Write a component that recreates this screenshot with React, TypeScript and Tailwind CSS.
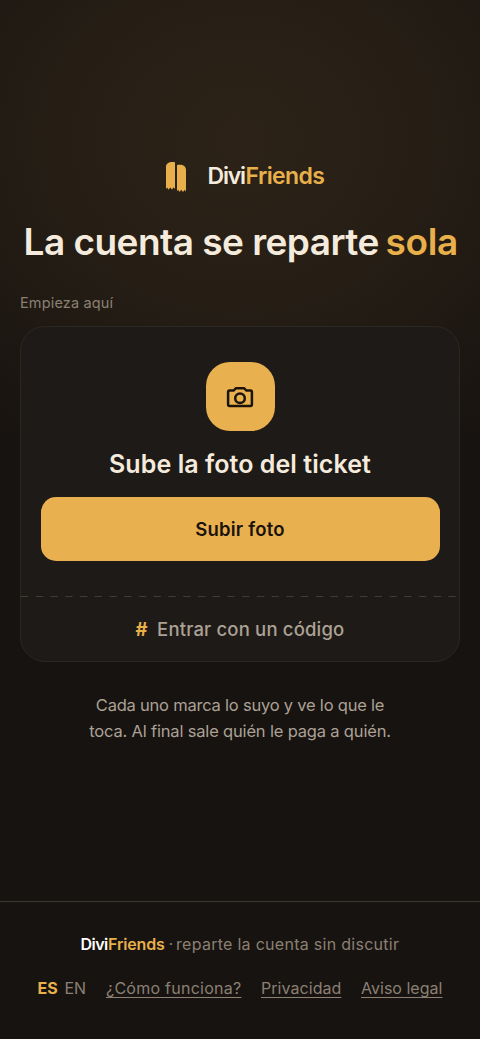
import React, { useState } from 'react';

const footerLinks = [
  { label: '¿Cómo funciona?', className: 'w-[135px] tracking-[0.253px]' },
  { label: 'Privacidad', className: 'w-[80px] tracking-[0.05px]' },
  { label: 'Aviso legal', className: 'w-[81px] tracking-[0.02px]' },
];

const LogoIcon: React.FC = () => (
  <svg className="mt-px" width="20" height="31" viewBox="0 0 20 31" fill="#e8b04b">
    <path d="M0 6C0 2.8 2.8 1 6 1h2.2q.8 0 .8.8V28.2L7.8 26.2 6 28.6 4.2 26.4 2.6 28.8 1.2 26.6 0 28Z" />
    <path d="M11 4.5q0-.8.8-.8H14C17.3 3.7 20 5.6 20 8.8V30.8L18.8 28.8 17 31 15.2 28.8 13.6 31 12.2 28.8 11 30.2Z" />
  </svg>
);

const CameraIcon: React.FC = () => (
  <svg
    width="28"
    height="22"
    viewBox="0 0 28 22"
    fill="none"
    stroke="#1c140a"
    strokeWidth="2.5"
    strokeLinejoin="round"
  >
    <path d="M3.6 4.5H7.8L9.8 2.2H18.2L20.2 4.5H24.4Q25.9 4.5 25.9 6V18.4Q25.9 19.9 24.4 19.9H3.6Q2.1 19.9 2.1 18.4V6Q2.1 4.5 3.6 4.5Z" />
    <circle cx="14" cy="12.3" r="4.8" />
  </svg>
);

const App: React.FC = () => {
  const [lang, setLang] = useState('ES');

  return (
    <div className="flex h-[1039px] w-full flex-col overflow-hidden whitespace-nowrap bg-[#171310] bg-[radial-gradient(ellipse_420px_360px_at_50%_140px,#2c2218_0%,#261e15_45%,#171310_100%)] font-['Inter',sans-serif] text-[#f5ebdd]">
      <main className="flex flex-1 flex-col px-5 pt-[156px]">
        <div className="flex h-10 items-center pl-[146px]">
          <LogoIcon />
          <div className="flex pl-[21.5px] text-[23px] leading-10 font-semibold">
            <span className="w-[38px] tracking-[-1.2px]">Divi</span>
            <span className="tracking-[-0.6px] text-[#e8b04b]">Friends</span>
          </div>
        </div>

        <h1 className="mt-[22px] flex h-12 pl-[3.5px] text-[37px] leading-[48px] font-semibold">
          <span className="w-[362px] tracking-[-0.53px]">La cuenta se reparte</span>
          <span className="tracking-[-0.346px] text-[#e8b04b]">sola</span>
        </h1>

        <p className="mt-[27px] h-5 text-[14.5px] leading-5 tracking-[0.148px] text-[#8b8073]">Empieza aquí</p>

        <section className="mt-[13px] flex h-[336px] flex-col rounded-[25px] border border-[#2b2823] bg-[#1e1a17]">
          <div className="flex flex-col items-center px-[19.5px] pt-[35px]">
            <div className="flex size-[69px] items-center justify-center rounded-[24px] bg-[#e8b04e]">
              <CameraIcon />
            </div>
            <h2 className="mt-[17px] h-8 text-[25px] leading-8 font-semibold tracking-[0.068px]">
              Sube la foto del ticket
            </h2>
            <button className="mt-[17px] h-[64px] w-full rounded-[15px] bg-[#e8b04e] pt-0.5 text-[18.5px] font-semibold tracking-[0.21px] text-[#1a130b]">
              Subir foto
            </button>
          </div>
          <svg className="mt-[35px] h-px w-full shrink-0" aria-hidden="true">
            <line x1="0" y1="0.5" x2="438" y2="0.5" stroke="#403b35" strokeDasharray="7.37 7.37" />
          </svg>
          <button className="flex flex-1 items-center justify-center gap-[9.5px] pt-0.5 text-[18.5px] font-medium text-[#aca195]">
            <span className="font-bold text-[#e8b04b]">#</span>
            <span className="tracking-[0.171px]">Entrar con un código</span>
          </button>
        </section>

        <div className="mt-[30px] flex flex-col items-center text-[16.5px] leading-[26px] text-[#aca195]">
          <span className="tracking-[-0.216px]">Cada uno marca lo suyo y ve lo que le</span>
          <span className="tracking-[-0.175px]">toca. Al final sale quién le paga a quién.</span>
        </div>
      </main>

      <footer className="h-[138px] border-t border-[#3a3630] pt-[30px] text-[16px] leading-6 text-[#8b8073]">
        <div className="flex h-6 pl-[80.5px]">
          <span className="w-[27.5px] font-semibold tracking-[-0.544px] text-white">Divi</span>
          <span className="w-[60.5px] font-semibold tracking-[-0.161px] text-[#e8b04b]">Friends</span>
          <span className="w-[7.5px]">·</span>
          <span className="tracking-[0.281px]">reparte la cuenta sin discutir</span>
        </div>
        <div className="mt-5 flex h-6 pl-[37.5px]">
          {['ES', 'EN'].map((l) => (
            <button
              key={l}
              onClick={() => setLang(l)}
              className={l === lang ? 'w-[27px] text-left font-bold text-[#e8b04b]' : 'w-[27px] text-left'}
            >
              {l}
            </button>
          ))}
          <nav className="ml-[14.5px] flex gap-5">
            {footerLinks.map((link) => (
              <a
                key={link.label}
                href="#"
                className={`underline decoration-1 underline-offset-[3px] ${link.className}`}
              >
                {link.label}
              </a>
            ))}
          </nav>
        </div>
      </footer>
    </div>
  );
};

export default App;
